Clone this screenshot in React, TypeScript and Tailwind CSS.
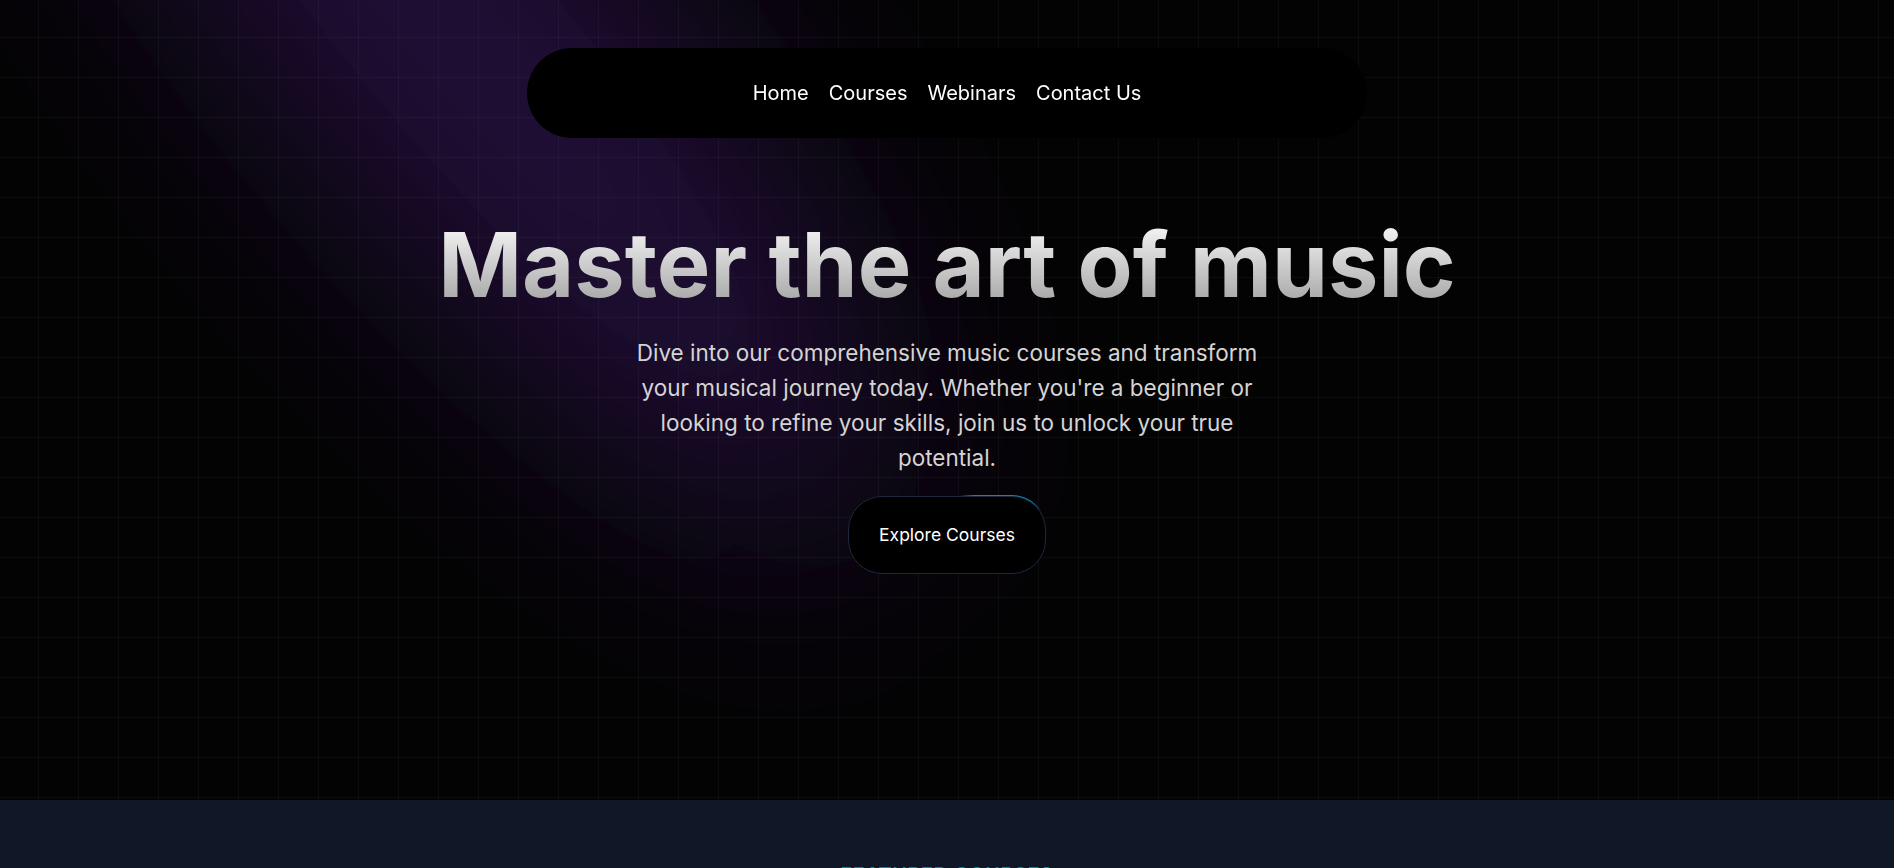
const links = ["Home", "Courses", "Webinars", "Contact Us"];

const Navbar = () => {
  return (
    <div className="fixed inset-x-0 top-[48px] z-50 mx-auto max-w-[840px]">
      <nav className="flex justify-center gap-5 rounded-full border border-transparent bg-black px-10 py-[29px]">
        {links.map((link) => (
          <a key={link} className="cursor-pointer text-[20px] leading-[30px] text-white hover:opacity-90">
            {link}
          </a>
        ))}
      </nav>
    </div>
  );
};

// purple beam behind the hero
const Spotlight = () => {
  return (
    <svg
      className="pointer-events-none absolute inset-0 h-full w-full overflow-visible"
      viewBox="0 0 1894 800"
      preserveAspectRatio="none"
      fill="none"
    >
      <defs>
        <filter id="spot" filterUnits="userSpaceOnUse" x="-900" y="-900" width="3400" height="2800">
          <feGaussianBlur stdDeviation="115" />
        </filter>
      </defs>
      <ellipse
        cx="460"
        cy="40"
        rx="640"
        ry="180"
        transform="rotate(50 460 40)"
        fill="rgb(135,50,230)"
        fillOpacity="0.24"
        filter="url(#spot)"
      />
    </svg>
  );
};

const MovingBorderButton = ({ children }: { children: string }) => {
  return (
    <button className="relative h-[80px] w-[200px] overflow-hidden rounded-[35px] bg-transparent p-px">
      <div className="absolute inset-0 rounded-[34px]">
        <div className="absolute left-[105px] top-[-48px] h-[100px] w-[100px] bg-[radial-gradient(#0ea5e9_40%,transparent_60%)] opacity-80" />
      </div>
      <div className="relative flex h-full w-full items-center justify-center rounded-[34px] border border-slate-800 bg-black text-[17.5px] text-white antialiased">
        {children}
      </div>
    </button>
  );
};

const Hero = () => {
  return (
    <div className="relative mx-auto flex h-[800px] w-full flex-col items-center justify-center overflow-hidden">
      <Spotlight />
      <div className="relative z-10 w-full px-5 pb-5 pt-[15px] text-center">
        <h1 className="bg-gradient-to-b from-neutral-50 to-neutral-400 bg-clip-text text-[90px] font-bold leading-none text-transparent">
          Master the art of music
        </h1>
        <p className="mx-auto mt-[25px] max-w-[640px] text-[22.5px] font-normal leading-[35px] text-neutral-300">
          Dive into our comprehensive music courses and transform your musical journey today. Whether
          you're a beginner or looking to refine your skills, join us to unlock your true potential.
        </p>
        <div className="mt-5">
          <MovingBorderButton>Explore Courses</MovingBorderButton>
        </div>
      </div>
    </div>
  );
};

const FeaturedCourses = () => {
  return (
    <div className="bg-gray-900 py-[60px]">
      <div className="text-center">
        <h2 className="text-[20px] font-semibold uppercase leading-[30px] tracking-wide text-teal-600">
          Featured Courses
        </h2>
      </div>
    </div>
  );
};

export default function App() {
  return (
    <main className="min-h-screen bg-[#030303] bg-[linear-gradient(to_right,rgba(255,255,255,0.035)_1px,transparent_1px),linear-gradient(to_bottom,rgba(255,255,255,0.035)_1px,transparent_1px)] bg-[size:40px_40px] bg-[position:38px_37px] font-[Inter,sans-serif] antialiased">
      <Navbar />
      <Hero />
      <FeaturedCourses />
    </main>
  );
}
